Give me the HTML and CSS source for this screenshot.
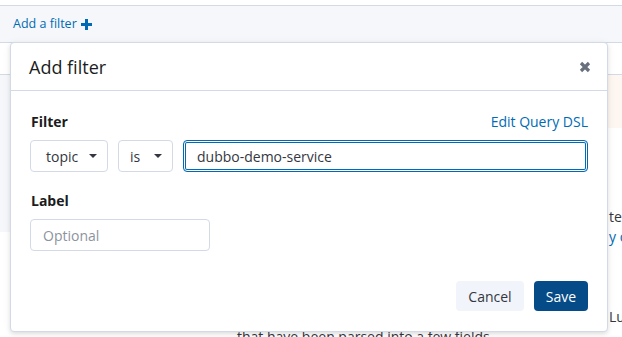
FILE: index.html
```html
<!DOCTYPE html>
<html lang="en">
  <head>
    <meta charset="utf-8" />
    <title>Add filter</title>
    <link rel="stylesheet" href="styles.css">
  </head>
<body>

<div class="querybar">
  <a href="#" class="add-filter">Add a filter
    <svg width="11" height="11" viewBox="0 0 11 11"><rect x="4" y="0" width="3" height="11" fill="#006bb4"/><rect x="0" y="4" width="11" height="3" fill="#006bb4"/></svg>
  </a>
</div>
<div class="subbar"></div>

<div class="main">
  <div class="sidebar"></div>
  <div class="content">
    <div class="callout"></div>
    <div class="text">
      <div class="line peek">text</div>
      <div class="line peek"><a href="#">y of</a></div>
    </div>
    <div class="text lower">
      <div class="line peek">Lucene</div>
      <div class="line">that have been parsed into a few fields.</div>
    </div>
  </div>
</div>

<div class="popover">
  <div class="popover-head">
    <h2>Add filter</h2>
    <svg class="close" width="12" height="12" viewBox="0 0 12 12"><path d="M2 2 L10 10 M10 2 L2 10" stroke="#69707d" stroke-width="3.2"/></svg>
  </div>
  <div class="popover-body">
    <div class="label-row">
      <label>Filter</label>
      <a href="#" class="dsl">Edit Query DSL</a>
    </div>
    <div class="filter-row">
      <div class="select">topic
        <svg width="8" height="4" viewBox="0 0 8 4"><path d="M0 0 L8 0 L4 4 Z" fill="#343741"/></svg>
      </div>
      <div class="select select-op">is
        <svg width="8" height="4" viewBox="0 0 8 4"><path d="M0 0 L8 0 L4 4 Z" fill="#343741"/></svg>
      </div>
      <div class="field focused">dubbo-demo-service</div>
    </div>
    <div class="label-row second">
      <label>Label</label>
    </div>
    <div class="field placeholder short">Optional</div>
  </div>
  <div class="popover-foot">
    <button class="btn btn-cancel">Cancel</button>
    <button class="btn btn-save">Save</button>
  </div>
</div>

</body>
</html>
```

FILE: styles.css
```css
body {
    margin: 0;
    width: 622px;
    height: 337px;
    overflow: hidden;
    font-family: "Open Sans", "DejaVu Sans", sans-serif;
    font-size: 14px;
    color: #343741;
    position: relative;
    background: #fff;
}
a {
    text-decoration: none;
    color: #006bb4;
}
.querybar {
    margin-top: 5px;
    height: 36px;
    border-top: 1px solid #d3dae6;
    border-bottom: 1px solid #d3dae6;
    background: #f5f7fa;
    display: flex;
    align-items: center;
    padding-left: 13px;
}
.add-filter {
    font-size: 12.5px;
    line-height: 16px;
    display: flex;
    align-items: center;
    gap: 4px;
}
.subbar {
    height: 31px;
    border-bottom: 1px solid #d3dae6;
}
.main {
    display: flex;
}
.sidebar {
    flex-shrink: 0;
    width: 220px;
    height: 157px;
    background: #f5f7fa;
}
.content {
    flex: 1;
    min-width: 0;
    padding-left: 17px;
}
.callout {
    height: 53px;
    background: #fef6f0;
}
.text {
    margin-top: 79px;
    line-height: 20px;
    white-space: nowrap;
}
.text.lower {
    margin-top: 60px;
}
.peek {
    padding-left: 372px;
}

.popover {
    position: absolute;
    top: 42px;
    left: 10px;
    width: 598px;
    box-sizing: border-box;
    background: #fff;
    border: 1px solid #d3dae6;
    border-radius: 4px;
    box-shadow: 0 2px 4px rgba(0, 0, 0, 0.1), 0 1px 10px rgba(0, 0, 0, 0.05);
}
.popover-head {
    height: 47px;
    border-bottom: 1px solid #d3dae6;
    display: flex;
    align-items: center;
    justify-content: space-between;
    padding: 0 16px 0 18px;
}
.popover-head h2 {
    margin: 0;
    font-size: 18px;
    line-height: 24px;
    font-weight: 400;
    color: #1a1c21;
}
.popover-body {
    padding: 21px 19px 0 19px;
}
.label-row {
    display: flex;
    justify-content: space-between;
    line-height: 20px;
    margin-bottom: 8px;
}
.label-row.second {
    margin-top: 19px;
}
label {
    font-weight: 700;
    color: #1a1c21;
    padding-left: 1px;
}
.filter-row {
    display: flex;
    gap: 10px;
}
.select {
    width: 78px;
    height: 32px;
    box-sizing: border-box;
    border: 1px solid #d3dae6;
    border-radius: 4px;
    display: flex;
    align-items: center;
    justify-content: space-between;
    padding: 0 10px 0 15px;
}
.select-op {
    width: 55px;
    padding-left: 11px;
}
.field {
    height: 32px;
    box-sizing: border-box;
    border: 1px solid #d3dae6;
    border-radius: 4px;
    display: flex;
    align-items: center;
    padding-left: 12px;
}
.focused {
    flex: 1;
    border: 1px solid #006bb4;
    box-shadow: inset 0 0 0 1px #fff, inset 0 0 0 2px #006bb4;
    padding-left: 13px;
}
.short {
    width: 180px;
}
.placeholder {
    color: #8c939e;
}
.popover-foot {
    display: flex;
    justify-content: flex-end;
    gap: 10px;
    padding: 30px 19px 20px 0;
}
.btn {
    height: 30px;
    border: none;
    border-radius: 4px;
    font-family: "Open Sans", "DejaVu Sans", sans-serif;
    font-size: 14px;
    padding: 0;
}
.btn-cancel {
    width: 68px;
    background: #f1f4fa;
    color: #343741;
}
.btn-save {
    width: 54px;
    background: #054b87;
    color: #fff;
}
```
